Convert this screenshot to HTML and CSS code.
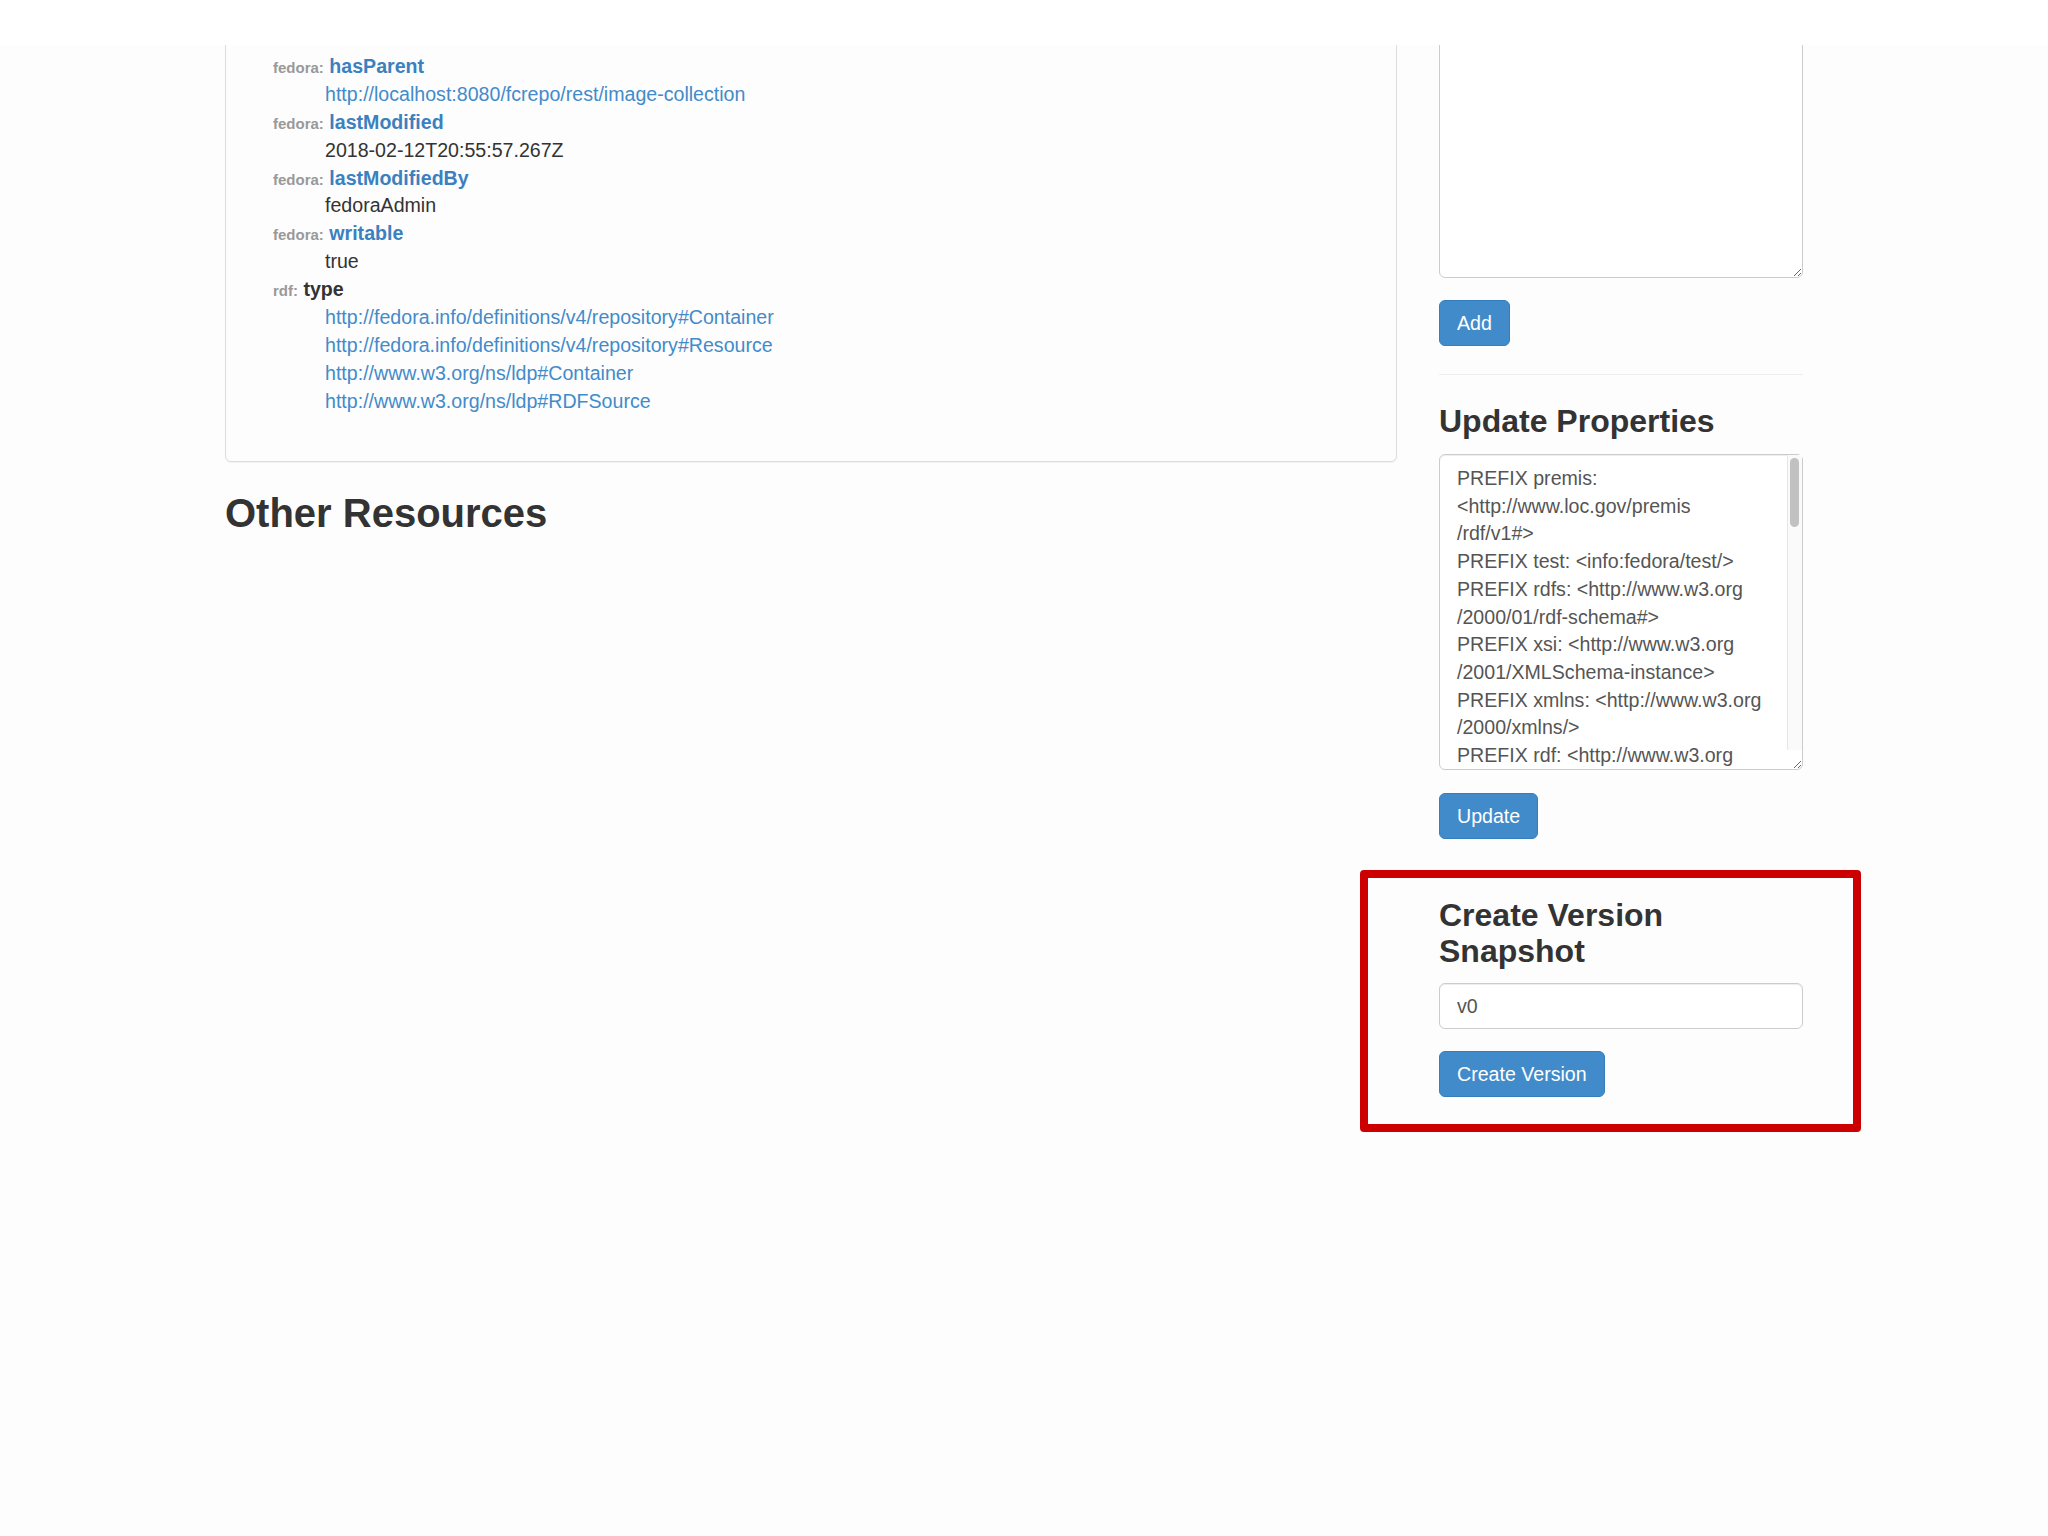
FILE: index.html
```html
<!DOCTYPE html>
<html lang="en">
<head>
  <meta charset="UTF-8" />
  <meta name="viewport" content="width=device-width, initial-scale=1.0" />
  <title>image-collection - Fedora Repository</title>
  <link rel="stylesheet" href="styles.css">
</head>
<body>
  <div class="topbar"></div>

  <div class="container">
    <div class="main">
      <div class="panel">
        <dl class="props">
          <dd>fedoraAdmin</dd>
          <dt><small>fedora:</small> <a href="#">hasParent</a></dt>
          <dd><a href="#">http://localhost:8080/fcrepo/rest/image-collection</a></dd>
          <dt><small>fedora:</small> <a href="#">lastModified</a></dt>
          <dd>2018-02-12T20:55:57.267Z</dd>
          <dt><small>fedora:</small> <a href="#">lastModifiedBy</a></dt>
          <dd>fedoraAdmin</dd>
          <dt><small>fedora:</small> <a href="#">writable</a></dt>
          <dd>true</dd>
          <dt><small>rdf:</small> type</dt>
          <dd><a href="#">http://fedora.info/definitions/v4/repository#Container</a></dd>
          <dd><a href="#">http://fedora.info/definitions/v4/repository#Resource</a></dd>
          <dd><a href="#">http://www.w3.org/ns/ldp#Container</a></dd>
          <dd><a href="#">http://www.w3.org/ns/ldp#RDFSource</a></dd>
        </dl>
      </div>
      <h2>Other Resources</h2>
    </div>

    <div class="side">
      <form class="form-block">
        <textarea class="form-control new-text"></textarea>
        <div class="actions"><button type="button" class="btn">Add</button></div>
      </form>

      <hr>

      <form class="form-block">
        <h3>Update Properties</h3>
        <div class="scroll-wrap">
          <textarea class="form-control sparql">PREFIX premis:
&lt;http://www.loc.gov/premis
/rdf/v1#&gt;
PREFIX test: &lt;info:fedora/test/&gt;
PREFIX rdfs: &lt;http://www.w3.org
/2000/01/rdf-schema#&gt;
PREFIX xsi: &lt;http://www.w3.org
/2001/XMLSchema-instance&gt;
PREFIX xmlns: &lt;http://www.w3.org
/2000/xmlns/&gt;
PREFIX rdf: &lt;http://www.w3.org
/1999/02/22-rdf-syntax-ns#&gt;
PREFIX xs: &lt;http://www.w3.org
/2001/XMLSchema&gt;
PREFIX fedora: &lt;http://fedora.info
/definitions/v4/repository#&gt;
PREFIX xml: &lt;http://www.w3.org
/XML/1998/namespace&gt;
PREFIX ebucore: &lt;http://www.ebu.ch
/metadata/ontologies/ebucore
/ebucore#&gt;
PREFIX ldp: &lt;http://www.w3.org
/ns/ldp#&gt;
PREFIX dcterms: &lt;http://purl.org
/dc/terms/&gt;
PREFIX iana: &lt;http://www.iana.org
/assignments/relation/&gt;
PREFIX authz: &lt;http://fedora.info
/definitions/v4/authorization#&gt;
PREFIX foaf: &lt;http://xmlns.com
/foaf/0.1/&gt;
PREFIX dc: &lt;http://purl.org/dc
/elements/1.1/&gt;

DELETE { }
INSERT {
&lt;&gt; fedora:writable "true" ;
  fedora:lastModifiedBy
  "fedoraAdmin" .
}
WHERE { }</textarea>
          <div class="scrollbar"><div class="thumb"></div></div>
        </div>
        <div class="actions"><button type="button" class="btn">Update</button></div>
      </form>

      <form class="version">
        <div class="highlight"></div>
        <h3>Create Version Snapshot</h3>
        <input type="text" class="form-control" value="v0">
        <div class="actions"><button type="button" class="btn">Create Version</button></div>
      </form>
    </div>
  </div>
</body>
</html>
```

FILE: styles.css
```css
* {
  box-sizing: border-box;
}
html, body {
  min-height: 100%;
}
body {
  margin: 0; min-height: 100vh;
  background: #fdfdfd; color: #333;
  font-family: "Liberation Sans", Arial, sans-serif;
  font-size: 19.6px; line-height: 27.9px;
}
a {
  color: #428bca; text-decoration: none;
}
.topbar {
  position: fixed; top: 0; left: 0; right: 0;
  height: 45px; background: #fff; z-index: 10;
}
.container {
  display: flex; align-items: flex-start; gap: 42px;
  width: 1578px; margin-left: 225px; padding-top: 3px;
}
.main {
  flex: none; width: 1172px;
}
.side {
  flex: none; width: 364px;
}

/* properties panel */
.panel {
  background: #fdfdfd;
  border: 1px solid #ddd; border-radius: 6px;
  box-shadow: 0 1px 1px rgba(0,0,0,0.05);
  padding: 21px; margin-bottom: 28px;
}
.props {
  margin: 0 0 24px; padding-left: 26px;
}
.props dt {
  font-weight: bold;
}
.props dt a {
  color: #3b80bf;
}
.props dt small {
  font-size: 15px; line-height: 1; color: #999;
}
.props dd {
  margin-left: 52px;
}
h2 {
  font-size: 40px; line-height: 46px; font-weight: bold;
  margin: 0; color: #333;
}
h3 {
  font-size: 32px; line-height: 37px; font-weight: bold;
  margin: 0 0 14px; color: #333;
}

/* side forms */
.form-control {
  display: block; width: 100%;
  background: #fff; color: #555;
  border: 1px solid #ccc; border-radius: 6px;
  box-shadow: inset 0 1px 1px rgba(0,0,0,0.075);
  font: inherit; padding: 8px 17px;
}
.new-text {
  height: 275px;
}
.scroll-wrap {
  position: relative;
}
.sparql {
  height: 316px; line-height: 27.7px;
  padding: 10px 20px 8px 17px;
}
.scrollbar {
  position: absolute; top: 1px; right: 1px; bottom: 20px;
  width: 15px; background: #fafafa;
  border-left: 1px solid #e6e6e6;
  padding: 3px 3px 0 2px;
}
.thumb {
  height: 69px; border-radius: 5px; background: #c1c1c1;
}
input.form-control {
  height: 46px;
}
.actions {
  display: flex; margin-top: 22px;
}
.scroll-wrap + .actions {
  margin-top: 23px;
}
.btn {
  background: #428bca; color: #fff;
  border: 1px solid #357ebd; border-radius: 6px;
  font: inherit; line-height: 28px;
  padding: 8px 17px; cursor: pointer;
}
hr {
  border: 0; border-top: 1px solid #eee;
  margin: 28px 0;
}
.version {
  position: relative; margin-top: 58px;
}
.version h3 {
  line-height: 36px;
}
.highlight {
  position: absolute; top: -27px; bottom: -35px; left: -79px; right: -58px;
  border: 8px solid #cc0000; border-radius: 4px;
  pointer-events: none;
}
```
